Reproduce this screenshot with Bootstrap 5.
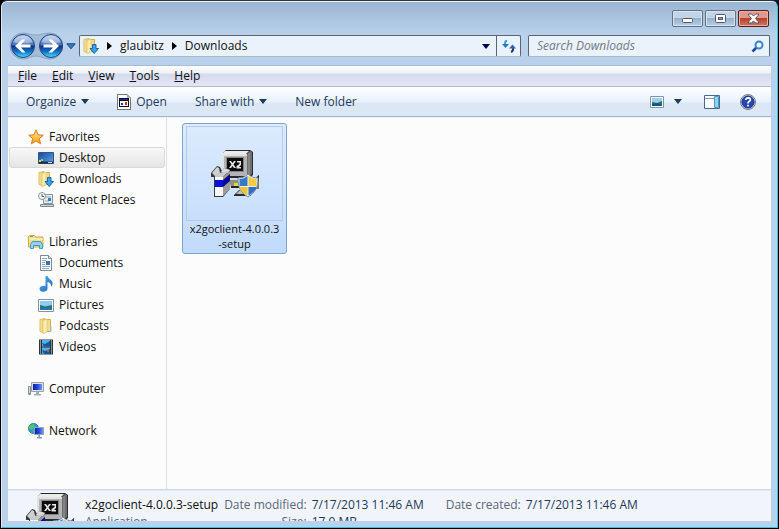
<!DOCTYPE html>
<html lang="en">
<head>
<meta charset="utf-8">
<meta name="viewport" content="width=device-width, initial-scale=1">
<title>Downloads</title>
<link href="https://cdn.jsdelivr.net/npm/bootstrap@5.3.0/dist/css/bootstrap.min.css" rel="stylesheet">
<style>
body{font:12px/16px "Open Sans","Noto Sans",sans-serif;color:#111;background:linear-gradient(90deg,#000 50%,#02182c 50%);overflow:hidden}
button,input{font:inherit;color:inherit}
button{background:none;border:0;padding:0}
svg{display:block;flex:none}
a{color:inherit;text-decoration:none}
.win{height:100vh;border:1px solid #000;border-top-color:#2b3240;border-radius:7px 7px 0 0}
.glass{background:linear-gradient(#9ab5d2,#b9d1ea 32px,#b9d1ea);border:1px solid #35c3dc;border-top-color:#eef5fb;border-left-color:#dce9f5;border-radius:6px 6px 0 0;padding:0 6px 6px}
.caps{height:33px;gap:2px;padding:8px 2px 0 0}
.cap{width:31px;height:17px;border:1px solid #5f7287;border-radius:2px;box-shadow:inset 0 0 0 1px #d7e5f3;background:linear-gradient(#c3d4e6 47%,#98b2cd 50%,#b9cee3)}
.cap-x{border-color:#571c1b;box-shadow:inset 0 0 0 1px #e8b0a5;background:linear-gradient(#e09a8c 47%,#b8412c 50%,#d3755c)}
.addr{height:30px;padding:0 1px 8px 1px;gap:3px}
.recent{margin-left:3px}
.crumbs{height:22px;border:1px solid #5b6470;border-bottom-color:#aab7c6;border-radius:2px;background:#eaf2fb;padding-left:3px}
.crumbs button{height:20px}
.drop{width:20px}
.refresh{width:24px;border-left:1px solid #5b6470}
.search{flex:0 0 242px;height:22px;border:1px solid #5b6470;border-bottom-color:#aab7c6;border-radius:2px;background:#eaf2fb;padding:0 5px 0 8px}
.search input{border:0;outline:0;background:none;padding:0;font-style:italic;min-width:0}
.search input::placeholder{color:#747a82;opacity:1}
.menus{height:22px;padding:0 10px;gap:15px;background:linear-gradient(#fff,#eef1f9 7px,#d5daec 8px,#e3e7f5);border-top:1px solid #a5bdd8;border-bottom:1px solid #b3bccb}
.tools{height:30px;padding:0 15px 0 18px;color:#1e395b;background:linear-gradient(#fcfeff,#e8f2fb 15px,#dce7f5 16px,#dce7f5);border-bottom:1px solid #9fb5d0}
.tools button{gap:5px}
.cmds{gap:28px}
.more{padding:0 6px 0 2px !important}
.side{width:159px;border-right:1px solid #d5e3f1;padding:8px 1px 0 0}
.pane{background:#fcfcfc;border-top:1px solid #e9f0f7}
.rowi{height:21px;padding:0 0 0 20px;gap:5px;white-space:nowrap}
.sub{padding-left:30px}
.gap-row{margin-top:21px}
.sel{border:1px solid #d9d9d9;border-radius:3px;background:linear-gradient(#f8f8f8,#e5e5e5);padding-left:28px;margin-left:1px}
.files{padding:5px 15px}
.tile{width:105px;height:131px;border:1px solid #7da2ce;border-radius:3px;background:linear-gradient(#dcebfd,#c1dbfc);padding:2px}
.cap-text{font-size:11px;line-height:15px}
.thumb{width:97px;height:96px;border:1px solid #b4cbe6}
.details{height:32px;background:#f1f5fb;border-top:1px solid #ccd9ea;color:#5a6779;line-height:17px;overflow:hidden;box-shadow:inset 0 1px #dfe8f3}
.details .ic{padding:3px 11px 0 18px}
.details .t{padding-top:6px}
.nm{color:#111}
.val{color:#1e395b}
.meta{margin-left:6px}
.meta td{padding:0}
.meta .val,.made .val{padding-left:5px}
.made{margin-left:22px}
</style>
<script src="https://cdn.jsdelivr.net/npm/bootstrap@5.3.0/dist/js/bootstrap.bundle.min.js"></script>
</head>
<body>
<svg width="0" height="0" class="position-absolute" aria-hidden="true">
<defs>
<linearGradient id="orb" x1="0" y1="0" x2="0" y2="1"><stop offset="0" stop-color="#b9cdea"/><stop offset=".45" stop-color="#4a74bd"/><stop offset=".5" stop-color="#0c3384"/><stop offset=".75" stop-color="#1673c8"/><stop offset="1" stop-color="#4be0ff"/></linearGradient>
<linearGradient id="fold" x1="0" x2="1"><stop offset="0" stop-color="#f9ebab"/><stop offset="1" stop-color="#deb94f"/></linearGradient>
<linearGradient id="blu" x1="0" y1="0" x2="1" y2="1"><stop offset="0" stop-color="#55b8f0"/><stop offset="1" stop-color="#1763b8"/></linearGradient>
<linearGradient id="scr" x1="0" x2="1"><stop offset="0" stop-color="#0a1fa8"/><stop offset=".5" stop-color="#2348dc"/><stop offset="1" stop-color="#6d9af5"/></linearGradient>
<linearGradient id="desk" x1="0" y1="0" x2="1" y2="1"><stop offset="0" stop-color="#1748a0"/><stop offset="1" stop-color="#5aa5e8"/></linearGradient>
<linearGradient id="star" x1="0" y1="0" x2="0" y2="1"><stop offset="0" stop-color="#fff08a"/><stop offset="1" stop-color="#f79a1c"/></linearGradient>
<symbol id="folder" viewBox="0 0 16 16"><path d="M2 1.500l5-1v14.500l-5-1.500z" fill="url(#fold)" stroke="#dcbd62"/><path d="M6.500 1.500h6v12h-6z" fill="#f3dc8e" stroke="#d2ad4e"/><path d="M5 2.500l4-1.500v13l-4 1.500z" fill="#fbeeb5" stroke="#dfc36c" stroke-width=".7"/><path d="M12.500 8.500h1v5h-1z" fill="#8fc6ea"/></symbol>
<symbol id="dl" viewBox="0 0 16 16"><use href="#folder" x="-1" width="16" height="16"/><path d="M9.500 6.500h3.500v4h2.500l-4.300 5-4.200-5h2.500z" fill="#38a5ea" stroke="#1665ad"/></symbol>
<symbol id="x2" viewBox="0 0 48 48">
<path d="M12 3l3-3h24l3 2v23l-4 3H12z" fill="#2a2a2a"/><path d="M11 4l3-3h24l-3 3z" fill="#ececec"/><path d="M11 4h25v22H11z" fill="#b4b4b4"/><path d="M36 4l3-3 2 1v22l-5 3z" fill="#6e6e6e"/><path d="M38 3v22" stroke="#9a9a9a"/><path d="M11 4h25v2H13v20h-2z" fill="#e2e2e2"/><path d="M15 7h18v15H15z" fill="#858585"/><path d="M16 8h16v13H16z" fill="#0c0c0c"/>
<path d="M18 11h2l1.500 2 1.500-2h2l-2.500 3.500L25 18h-2l-1.500-2-1.500 2h-2l2.500-3.500zM26 11h4v4l-2 2h2v1.500h-4.500V16l3-2v-1.500H26z" fill="#e4e4e4"/>
<path d="M18 28h20v2H18z" fill="#d8d8d8"/><path d="M18 30h20l-2 7H20z" fill="#8e8e8e"/><path d="M20 36h10v2H20z" fill="#222"/><path d="M23 33h4v3h-4z" fill="#dce317"/>
<path d="M42 30l7-6 3 3-4 5v7h-3z" fill="#777"/><path d="M42 31l6-6 2 2-3 5z" fill="#333"/><path d="M23 45l5-5h12v6H23z" fill="#2b2b2b"/><path d="M25 44l4-4h10v4z" fill="#bdbdbd"/>
<path d="M0 23l6-7 3 1 2 4 2-3 6 1v20l-7 8H3V27H0z" fill="#3a3a3a"/><path d="M1 23l5-6 2 1 1 5-5 3z" fill="#d0d0d0"/><path d="M10 22l3-4 6 2-2 3z" fill="#dedede"/><path d="M4 27h8v19H4z" fill="#f7f7f7"/><path d="M12 27l7-6v18l-7 7z" fill="#9b9b9b"/><path d="M4 24l8-2 6-1-6 6H4z" fill="#c9c9c9"/><path d="M4 30h8v7H4z" fill="#0711dc"/><path d="M12 30l7-6v7l-7 6z" fill="#06098d"/>
<path d="M37 24c3 3 6 4 10 4 0 9-2 14-10 19-8-5-10-10-10-19 4 0 7-1 10-4z" fill="#e7edf4" stroke="#7b91aa"/><path d="M36.500 26c-2.500 2-5 3-8 3v7h8z" fill="#3979c8"/><path d="M37.500 26c2.500 2 5 3 8 3v7h-8z" fill="#f4ca3f"/><path d="M28.500 37h8v8.500c-5-3-7-5-8-8.500z" fill="#f2c333"/><path d="M37.500 37h8c-1 3.500-3 5.500-8 8.500z" fill="#346eba"/></symbol>
</defs></svg>
<div class="win">
<main class="glass h-100 d-flex flex-column">
<div class="caps d-flex justify-content-end flex-shrink-0">
<button class="cap d-flex justify-content-center align-items-center" aria-label="Minimize"><svg width="13" height="9"><rect x="1.500" y="4.500" width="10" height="4" rx="1" fill="#fff" stroke="#535666"/></svg></button>
<button class="cap d-flex justify-content-center align-items-center" aria-label="Maximize"><svg width="11" height="9"><rect x=".5" y=".5" width="10" height="8" rx="1" fill="#fff" stroke="#535666"/><rect x="3.500" y="3.500" width="4" height="2" fill="#8fa9c9" stroke="#535666"/></svg></button>
<button class="cap cap-x d-flex justify-content-center align-items-center" aria-label="Close"><svg width="13" height="11" viewBox="0 0 13 11"><path d="M1.500 1h3L6.500 3l2-2h3v1L8.500 5.500l3 3.500v1h-3l-2-2-2 2h-3V9l3-3.500-3-3.500z" fill="#fff" stroke="#535666"/></svg></button>
</div>
<div class="addr d-flex flex-shrink-0">
<div class="d-flex align-items-center">
<svg width="54" height="28" viewBox="0 0 54 28" role="img" aria-label="Back and forward"><path d="M14 1c5 0 8 2 13 2s8-2 14-2a13 13 0 0 1 0 26c-6 0-9-3-14-3s-8 3-13 3A13 13 0 0 1 14 1z" fill="#a3bdd8" stroke="#8ba6c3"/><circle cx="14" cy="14" r="11.500" fill="url(#orb)" stroke="#23457f"/><circle cx="42" cy="14" r="11.500" fill="url(#orb)" stroke="#23457f"/><path d="M4.500 10C7 1.500 21 1.500 23.500 10q-9 3-19 0zM32.500 10C35 1.500 49 1.500 51.500 10q-9 3-19 0z" fill="#fff" opacity=".35"/><path d="M6 14l7-6.500h3.500l-4.500 5h9.500v3H12l4.500 5H13zM50 14l-7-6.500h-3.500l4.500 5h-9.500v3H44l-4.500 5H43z" fill="#fff"/></svg>
<button class="recent" aria-label="Recent pages"><svg width="10" height="7"><path d="M.8.800h8.400L5 5.800z" fill="#2c7fc4" stroke="#1f497f"/></svg></button>
</div>
<nav class="crumbs d-flex align-items-center flex-grow-1" aria-label="Address">
<svg width="16" height="16"><use href="#dl"/></svg>
<svg class="ms-2 me-2" width="5" height="8"><path d="M0 0l5 4-5 4z" fill="#000"/></svg><a href="#">glaubitz</a>
<svg class="ms-2 me-2" width="5" height="8"><path d="M0 0l5 4-5 4z" fill="#000"/></svg><a href="#">Downloads</a>
<button class="drop ms-auto d-flex align-items-center justify-content-center" aria-label="Previous locations"><svg width="8" height="5"><path d="M0 0h8L4 5z" fill="#00004c"/></svg></button>
<button class="refresh d-flex align-items-center justify-content-center" aria-label="Refresh"><svg width="14" height="13" viewBox="0 0 14 13"><path d="M5 .5Q2.500 1 3 5" fill="none" stroke="#31a4dc" stroke-width="2"/><path d="M0 4h7L3.500 8z" fill="#2c74c4"/><path d="M9 12q2.500-.5 2-4" fill="none" stroke="#22366f" stroke-width="2"/><path d="M7 8.500h7L10.500 4.500z" fill="#2d62ba"/></svg></button>
</nav>
<label class="search d-flex align-items-center ms-1"><input class="flex-grow-1" type="text" placeholder="Search Downloads" aria-label="Search Downloads"><svg width="13" height="13"><path d="M5.500 7.500L1.500 11.500" stroke="#1e4597" stroke-width="2.500"/><circle cx="8" cy="5" r="3.500" fill="#f5faff" stroke="#3584cc" stroke-width="2"/></svg></label>
</div>
<nav class="menus d-flex align-items-center flex-shrink-0"><button><u>F</u>ile</button><button><u>E</u>dit</button><button><u>V</u>iew</button><button><u>T</u>ools</button><button><u>H</u>elp</button></nav>
<div class="tools d-flex align-items-center flex-shrink-0">
<div class="cmds d-flex align-items-center">
<button class="d-flex align-items-center">Organize<svg width="8" height="5"><path d="M0 0h8L4 5z" fill="#1e395b"/></svg></button>
<button class="d-flex align-items-center"><svg width="14" height="16" viewBox="0 0 14 16" shape-rendering="crispEdges"><path d="M.5.500h10l3 3v12H.5z" fill="#fff" stroke="#777"/><path d="M10 0v4h4z" fill="#aaa"/><path d="M2 4h10v9H2z" fill="#111"/><path d="M3 7h8v5H3z" fill="#fff"/><path d="M3 5h8v1H3z" fill="#1728c0"/><path d="M4 9h2v2H4z" fill="#1634d4"/><path d="M8 8h2v3H8z" fill="#d52b24"/></svg>Open</button>
<button class="d-flex align-items-center">Share with<svg width="8" height="5"><path d="M0 0h8L4 5z" fill="#1e395b"/></svg></button>
<button>New folder</button>
</div>
<button class="ms-auto" aria-label="Change view"><svg width="14" height="12"><path d="M.5.500h13v11H.5z" fill="#fff" stroke="#7f93a9"/><path d="M2 2h10v8H2z" fill="#9ad1f0"/><path d="M2 6l5 1 5-2v5H2z" fill="#2c7263"/><path d="M2 8l5-1 5 2v1H2z" fill="#16518c"/></svg></button>
<button class="ms-2 more" aria-label="More views"><svg width="8" height="5"><path d="M0 0h8L4 5z" fill="#1e395b"/></svg></button>
<button class="ms-3" aria-label="Preview pane"><svg width="16" height="14"><path d="M.5.500h15v13H.5z" fill="#fff" stroke="#47698f"/><path d="M1 3.500h14" stroke="#7f9bb9"/><path d="M10.500 1.500h4v11h-4z" fill="#8ed2eb" stroke="#4e9dbd"/></svg></button>
<button class="ms-3 ps-1" aria-label="Help"><svg width="16" height="16"><circle cx="8" cy="8" r="7.500" fill="#cdd2da" stroke="#777d87"/><circle cx="8" cy="8" r="6" fill="#2447b8" stroke="#172f7f"/><path d="M5.700 6Q6 3.800 8.200 3.800 10.500 4 10.300 6 10 7 8.700 7.800 8 8.300 8 9.500M8 10.800v1.700" fill="none" stroke="#fff" stroke-width="1.700"/></svg></button>
</div>
<div class="pane d-flex flex-grow-1 overflow-hidden">
<nav class="side flex-shrink-0" aria-label="Places">
<a href="#" class="rowi d-flex align-items-center"><svg width="16" height="16"><path d="M8 .8l2.100 5 5.200.4-4 3.400 1.300 5.200L8 12l-4.600 2.800 1.300-5.200-4-3.400 5.200-.4z" fill="url(#star)" stroke="#dd7b1d"/></svg>Favorites</a>
<a href="#" class="rowi sub sel d-flex align-items-center"><svg width="16" height="16"><path d="M.5 2.500h15v11H.5z" fill="url(#desk)" stroke="#35547d"/><path d="M1 11.500h14v2H1z" fill="#1b2945"/><path d="M1 10h2v2H1z" fill="#f2c63a"/><path d="M3 9h2v2H3z" fill="#77d860"/><path d="M10 12h4v1h-4z" fill="#c7dced"/></svg>Desktop</a>
<a href="#" class="rowi sub d-flex align-items-center"><svg width="16" height="16"><use href="#dl"/></svg>Downloads</a>
<a href="#" class="rowi sub d-flex align-items-center"><svg width="16" height="16"><path d="M5.500 2.500h9v9h-9z" fill="#e8edf0" stroke="#8a9299"/><path d="M7 5h6M7 9h4" stroke="#91a9b9"/><path d="M10 6h3v3h-3z" fill="#2b80c9"/><path d="M2.500 12.500h13v2h-13z" fill="#ccd1d5" stroke="#858d94"/><circle cx="4" cy="4" r="3.500" fill="#f4f6f8" stroke="#8b949c"/><path d="M4 2v2.500h2" fill="none" stroke="#555"/></svg>Recent Places</a>
<a href="#" class="rowi gap-row d-flex align-items-center"><svg width="16" height="16"><path d="M.5 2.500l1-1h5l1 1.500h7.500v10H.5z" fill="#f5dd8a" stroke="#cda94a"/><path d="M2 2.500h3" stroke="#58b84c"/><path d="M1 5h14" stroke="#fff6cd"/><path d="M2.500 14.500v-4l2-3h8l2 3v4h-3v-3h-6v3z" fill="#8fd3f0" stroke="#4697c6"/></svg>Libraries</a>
<a href="#" class="rowi sub d-flex align-items-center"><svg width="16" height="16"><path d="M2.500.500h8l3 3v12h-11z" fill="#fff" stroke="#7f8c98"/><path d="M10.500.500v3h3" fill="#ddd" stroke="#7f8c98"/><path d="M4 3.500h5M4 5.500h4M4 7.500h3M4 9.500h3M4 11.500h8M4 13.500h7" stroke="#8cabc7"/><path d="M8 6h4v4H8z" fill="#2d76c3"/></svg>Documents</a>
<a href="#" class="rowi sub d-flex align-items-center"><svg width="16" height="16"><path d="M7.500 0h2c.5 3 4.500 3.500 5 6.500.2 2-.5 3.500-1.500 4.500.5-3-1-4.500-3.500-5v6.500c0 4-8 4.500-8 .5 0-3 4-4 6-2.800z" fill="url(#blu)"/></svg>Music</a>
<a href="#" class="rowi sub d-flex align-items-center"><svg width="16" height="16"><path d="M.5 2.500h15v12H.5z" fill="#fff" stroke="#8295a8"/><path d="M2 4h12v9H2z" fill="#8dcdf4"/><path d="M2 8l5 1.500L14 8v5H2z" fill="#267461"/><path d="M2 11l12-1v3H2z" fill="#2875ac"/></svg>Pictures</a>
<a href="#" class="rowi sub d-flex align-items-center"><svg width="16" height="16"><use href="#folder"/></svg>Podcasts</a>
<a href="#" class="rowi sub d-flex align-items-center"><svg width="16" height="16"><path d="M1 .5h14v15H1z" fill="#29343c"/><path d="M4 1h8v6.500H4zM4 8.500h8V15H4z" fill="#51aee8"/><path d="M4 4l3 1 5-3v5.500H6zM4 11l3 1 5-2v5H6z" fill="#1b568d"/><path d="M9 11h2v2H9z" fill="#a4623c"/><path d="M2.500 1.500v14M13.500 1.500v14" stroke="#edf1f3" stroke-dasharray="1 1"/></svg>Videos</a>
<a href="#" class="rowi gap-row d-flex align-items-center"><svg width="16" height="16"><path d="M.5 5.500h2v8h-2z" fill="#d2d5da" stroke="#8f949a"/><path d="M3.500 1.500h12v9h-12z" fill="#dce0e5" stroke="#9ca2a9"/><path d="M5 3h9v6H5z" fill="url(#scr)"/><path d="M8 11h3v2h2v1.500H6V13h2z" fill="#a5abb2"/><path d="M1 12h1v1H1z" fill="#3eb33e"/></svg>Computer</a>
<a href="#" class="rowi gap-row d-flex align-items-center"><svg width="16" height="16"><circle cx="5.500" cy="5.500" r="5" fill="#2a9be2" stroke="#237cab"/><path d="M1 3l4-2 2 2-3 4-3-1zM5 8l3-2v4H6z" fill="#57c554"/><path d="M6.500 4.500h9v7h-9z" fill="#dce2eb" stroke="#98a2b0"/><path d="M7 5h8v6H7z" fill="url(#scr)"/><path d="M10.500 12h1.500v2h2v1.500H9V14h1.500z" fill="#8596ae"/></svg>Network</a>
</nav>
<section class="files flex-grow-1">
<button class="tile d-flex flex-column align-items-center"><span class="thumb d-flex align-items-center justify-content-center"><svg width="48" height="48"><use href="#x2"/></svg></span><span class="cap-text text-center">x2goclient-4.0.0.3<br>-setup</span></button>
</section>
</div>
<footer class="details d-flex flex-shrink-0">
<div class="ic"><svg width="48" height="48"><use href="#x2"/></svg></div>
<div class="t text-nowrap"><div class="nm">x2goclient-4.0.0.3-setup</div><div>Application</div></div>
<div class="t"><table class="meta text-nowrap"><tr><td class="text-end">Date modified:</td><td class="val">7/17/2013 11:46 AM</td></tr><tr><td class="text-end">Size:</td><td class="val">17.9 MB</td></tr></table></div>
<div class="t made text-nowrap">Date created:<span class="val">7/17/2013 11:46 AM</span></div>
</footer>
</main>
</div>
</body>
</html>
